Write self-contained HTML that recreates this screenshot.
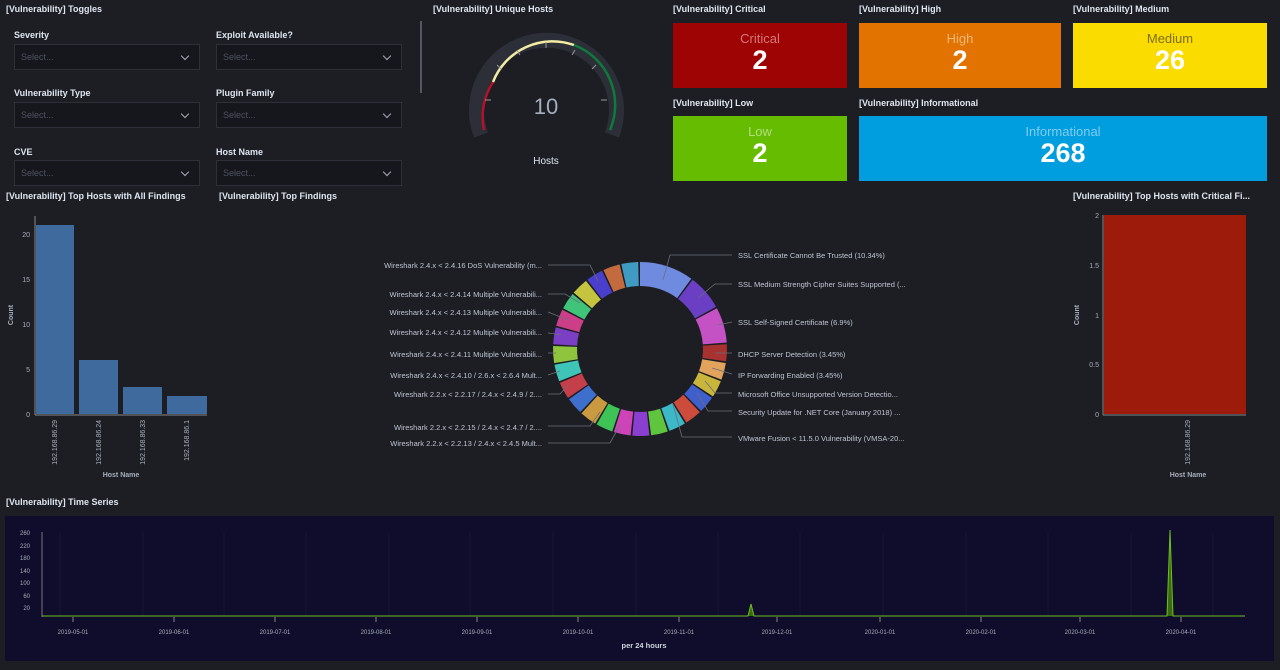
<!DOCTYPE html>
<html><head><meta charset="utf-8"><style>
*{margin:0;padding:0;box-sizing:border-box}
body{width:1280px;height:670px;background:#1d1e24;font-family:"Liberation Sans",sans-serif;color:#dfe5ef;position:relative;overflow:hidden}
.t{position:absolute;font-size:9px;font-weight:bold;color:#dfe5ef;white-space:nowrap}
.l{position:absolute;font-size:9px;font-weight:bold;color:#dfe5ef}
.sel{position:absolute;width:186px;height:26px;background:#16171c;border:1px solid #2e3039;font-size:9px;color:#4f5362;padding:7px 0 0 6px}
.sel:after{content:"";position:absolute;right:11px;top:8px;width:5px;height:5px;border-right:1px solid #a8acb8;border-bottom:1px solid #a8acb8;transform:rotate(45deg)}
.tile{position:absolute;text-align:center}
.tile .a{font-size:13px;margin-top:9px;line-height:14px}
.tile .b{font-size:27px;font-weight:bold;color:#fff;line-height:28px}
svg{position:absolute;left:0;top:0}
</style></head><body>
<div class="t" style="left:6px;top:4px">[Vulnerability] Toggles</div>
<div class="l" style="left:14px;top:30px">Severity</div>
<div class="l" style="left:216px;top:30px">Exploit Available?</div>
<div class="sel" style="left:14px;top:44px">Select...</div>
<div class="sel" style="left:216px;top:44px">Select...</div>
<div class="l" style="left:14px;top:88px">Vulnerability Type</div>
<div class="l" style="left:216px;top:88px">Plugin Family</div>
<div class="sel" style="left:14px;top:102px">Select...</div>
<div class="sel" style="left:216px;top:102px">Select...</div>
<div class="l" style="left:14px;top:147px">CVE</div>
<div class="l" style="left:216px;top:147px">Host Name</div>
<div class="sel" style="left:14px;top:160px">Select...</div>
<div class="sel" style="left:216px;top:160px">Select...</div>
<div style="position:absolute;left:420px;top:21px;width:2px;height:72px;background:#555862"></div>
<div class="t" style="left:433px;top:4px">[Vulnerability] Unique Hosts</div>
<div class="t" style="left:673px;top:4px">[Vulnerability] Critical</div>
<div class="t" style="left:859px;top:4px">[Vulnerability] High</div>
<div class="t" style="left:1073px;top:4px">[Vulnerability] Medium</div>
<div class="t" style="left:673px;top:98px">[Vulnerability] Low</div>
<div class="t" style="left:859px;top:98px">[Vulnerability] Informational</div>
<div class="tile" style="left:673px;top:23px;width:174px;height:65px;background:#9e0404"><div class="a" style="color:#d5777a">Critical</div><div class="b">2</div></div>
<div class="tile" style="left:859px;top:23px;width:202px;height:65px;background:#e27300"><div class="a" style="color:#f0b77a">High</div><div class="b">2</div></div>
<div class="tile" style="left:1073px;top:23px;width:194px;height:65px;background:#fbdc00"><div class="a" style="color:#7d6e10">Medium</div><div class="b">26</div></div>
<div class="tile" style="left:673px;top:116px;width:174px;height:65px;background:#66bc00"><div class="a" style="color:#b2de80">Low</div><div class="b">2</div></div>
<div class="tile" style="left:859px;top:116px;width:408px;height:65px;background:#009ddf"><div class="a" style="color:#80cdef">Informational</div><div class="b">268</div></div>
<div class="t" style="left:6px;top:191px">[Vulnerability] Top Hosts with All Findings</div>
<div class="t" style="left:219px;top:191px">[Vulnerability] Top Findings</div>
<div class="t" style="left:1073px;top:191px">[Vulnerability] Top Hosts with Critical Fi...</div>
<div class="t" style="left:6px;top:497px">[Vulnerability] Time Series</div>
<div style="position:absolute;left:5px;top:516px;width:1269px;height:145px;background:#100c2b"></div>

<svg width="1280" height="670" font-family="Liberation Sans, sans-serif">
<!-- gauge -->
<path d="M481,135 A70,70 0 1 1 612,135" fill="none" stroke="#2c2f37" stroke-width="15"/>
<path d="M484,130 A64,64 0 0 1 493,82" fill="none" stroke="#b3122a" stroke-width="2.5"/>
<path d="M493,82 A64,64 0 0 1 574,45" fill="none" stroke="#f2eca5" stroke-width="2.5"/>
<path d="M574,45 A64,64 0 0 1 610,130" fill="none" stroke="#0e7a3c" stroke-width="2.5"/>
<g stroke="#999" stroke-width="1">
<line x1="546" y1="42" x2="546" y2="48"/><line x1="517" y1="50" x2="520" y2="55"/><line x1="575" y1="50" x2="572" y2="55"/><line x1="497" y1="65" x2="501" y2="69"/><line x1="596" y1="65" x2="592" y2="69"/><line x1="485" y1="100" x2="491" y2="100"/><line x1="607" y1="100" x2="601" y2="100"/>
</g>
<text x="546" y="114" text-anchor="middle" font-size="22" fill="#a6adbb">10</text>
<text x="546" y="164" text-anchor="middle" font-size="10" fill="#dfe5ef">Hosts</text>

<!-- left bar chart -->
<g font-size="7" fill="#a8aebb">
<line x1="35" y1="216" x2="35" y2="415" stroke="#888"/><line x1="35" y1="415" x2="207" y2="415" stroke="#888"/>
<rect x="36" y="225" width="38" height="189" fill="#3e6a9e"/>
<rect x="79" y="360" width="39" height="54" fill="#3e6a9e"/>
<rect x="123" y="387" width="39" height="27" fill="#3e6a9e"/>
<rect x="167" y="396" width="40" height="18" fill="#3e6a9e"/>
<text x="30" y="237" text-anchor="end">20</text><text x="30" y="327" text-anchor="end">10</text><text x="30" y="282" text-anchor="end">15</text><text x="30" y="372" text-anchor="end">5</text><text x="30" y="417" text-anchor="end">0</text>
<text transform="translate(57,420) rotate(-90)" text-anchor="end">192.168.86.29</text>
<text transform="translate(101,420) rotate(-90)" text-anchor="end">192.168.86.24</text>
<text transform="translate(145,420) rotate(-90)" text-anchor="end">192.168.86.33</text>
<text transform="translate(189,420) rotate(-90)" text-anchor="end">192.168.86.1</text>
<text x="121" y="477" text-anchor="middle" font-weight="bold">Host Name</text>
<text transform="translate(13,315) rotate(-90)" text-anchor="middle" font-weight="bold">Count</text>
</g>

<!-- right bar chart -->
<g font-size="7" fill="#a8aebb">
<rect x="1104" y="215" width="142" height="199" fill="#9d1b0b"/>
<line x1="1103" y1="215" x2="1103" y2="415" stroke="#888"/><line x1="1103" y1="415" x2="1246" y2="415" stroke="#888"/>
<text x="1099" y="218" text-anchor="end">2</text><text x="1099" y="268" text-anchor="end">1.5</text><text x="1099" y="318" text-anchor="end">1</text><text x="1099" y="367" text-anchor="end">0.5</text><text x="1099" y="417" text-anchor="end">0</text>
<text transform="translate(1190,420) rotate(-90)" text-anchor="end">192.168.86.29</text>
<text x="1188" y="477" text-anchor="middle" font-weight="bold">Host Name</text>
<text transform="translate(1079,315) rotate(-90)" text-anchor="middle" font-weight="bold">Count</text>
</g>

<!-- donut -->
<g transform="translate(640,349)" fill="none" stroke-width="24">
<circle r="75" stroke="#6f8be0" stroke-dasharray="47.25 500" transform="rotate(-90)"/>
<circle r="75" stroke="#6a3fc4" stroke-dasharray="31 500" transform="rotate(-52.76)"/>
<circle r="75" stroke="#c452c4" stroke-dasharray="31 500" transform="rotate(-27.93)"/>
<circle r="75" stroke="#a8322f" stroke-dasharray="14.75 500" transform="rotate(-3.10)"/>
<circle r="75" stroke="#e2a45d" stroke-dasharray="14.75 500" transform="rotate(9.31)"/>
<circle r="75" stroke="#c9b53b" stroke-dasharray="14.75 500" transform="rotate(21.72)"/>
<circle r="75" stroke="#3f5fcc" stroke-dasharray="14.75 500" transform="rotate(34.14)"/>
<circle r="75" stroke="#cc4b3a" stroke-dasharray="14.75 500" transform="rotate(46.55)"/>
<circle r="75" stroke="#3cb8c8" stroke-dasharray="14.75 500" transform="rotate(58.97)"/>
<circle r="75" stroke="#5fc43e" stroke-dasharray="14.75 500" transform="rotate(71.38)"/>
<circle r="75" stroke="#8a3fd0" stroke-dasharray="14.75 500" transform="rotate(83.79)"/>
<circle r="75" stroke="#cc44b8" stroke-dasharray="14.75 500" transform="rotate(96.21)"/>
<circle r="75" stroke="#3ec456" stroke-dasharray="14.75 500" transform="rotate(108.62)"/>
<circle r="75" stroke="#c99a3f" stroke-dasharray="14.75 500" transform="rotate(121.03)"/>
<circle r="75" stroke="#3f6fcc" stroke-dasharray="14.75 500" transform="rotate(133.45)"/>
<circle r="75" stroke="#c43f4a" stroke-dasharray="14.75 500" transform="rotate(145.86)"/>
<circle r="75" stroke="#3fc4b8" stroke-dasharray="14.75 500" transform="rotate(158.28)"/>
<circle r="75" stroke="#8fc43f" stroke-dasharray="14.75 500" transform="rotate(170.69)"/>
<circle r="75" stroke="#7a3fc4" stroke-dasharray="14.75 500" transform="rotate(183.10)"/>
<circle r="75" stroke="#cc3f88" stroke-dasharray="14.75 500" transform="rotate(195.52)"/>
<circle r="75" stroke="#3fc47a" stroke-dasharray="14.75 500" transform="rotate(207.93)"/>
<circle r="75" stroke="#c4c43f" stroke-dasharray="14.75 500" transform="rotate(220.34)"/>
<circle r="75" stroke="#4a3fcc" stroke-dasharray="14.75 500" transform="rotate(232.76)"/>
<circle r="75" stroke="#c46a3f" stroke-dasharray="14.75 500" transform="rotate(245.17)"/>
<circle r="75" stroke="#3f9ac4" stroke-dasharray="14.75 500" transform="rotate(257.59)"/>
</g>
<g stroke="#6b6f7a" fill="none" stroke-width="0.8">
<polyline points="663,280 670,255 732,255"/><polyline points="698,298 715,284 732,284"/><polyline points="718,325 732,322"/>
<polyline points="715,353 732,353"/><polyline points="712,368 732,374"/><polyline points="705,381 715,393 732,393"/>
<polyline points="697,393 708,411 732,411"/><polyline points="673,404 682,437 732,437"/>
<polyline points="548,265 590,265 598,281"/><polyline points="548,294 565,294 580,303"/><polyline points="548,312 568,320"/>
<polyline points="548,333 562,335"/><polyline points="548,353 556,353"/><polyline points="548,375 560,371"/>
<polyline points="548,394 560,394 568,385"/><polyline points="548,426 590,426 600,412"/><polyline points="548,443 610,443 620,425"/>
</g>
<g font-size="7.5" fill="#bfc5d2">
<text x="738" y="258">SSL Certificate Cannot Be Trusted (10.34%)</text>
<text x="738" y="287">SSL Medium Strength Cipher Suites Supported (...</text>
<text x="738" y="325">SSL Self-Signed Certificate (6.9%)</text>
<text x="738" y="357">DHCP Server Detection (3.45%)</text>
<text x="738" y="378">IP Forwarding Enabled (3.45%)</text>
<text x="738" y="397">Microsoft Office Unsupported Version Detectio...</text>
<text x="738" y="415">Security Update for .NET Core (January 2018) ...</text>
<text x="738" y="441">VMware Fusion &lt; 11.5.0 Vulnerability (VMSA-20...</text>
</g>
<g font-size="7.5" fill="#bfc5d2" text-anchor="end">
<text x="542" y="268">Wireshark 2.4.x &lt; 2.4.16 DoS Vulnerability (m...</text>
<text x="542" y="297">Wireshark 2.4.x &lt; 2.4.14 Multiple Vulnerabili...</text>
<text x="542" y="315">Wireshark 2.4.x &lt; 2.4.13 Multiple Vulnerabili...</text>
<text x="542" y="335">Wireshark 2.4.x &lt; 2.4.12 Multiple Vulnerabili...</text>
<text x="542" y="357">Wireshark 2.4.x &lt; 2.4.11 Multiple Vulnerabili...</text>
<text x="542" y="378">Wireshark 2.4.x &lt; 2.4.10 / 2.6.x &lt; 2.6.4 Mult...</text>
<text x="542" y="397">Wireshark 2.2.x &lt; 2.2.17 / 2.4.x &lt; 2.4.9 / 2....</text>
<text x="542" y="430">Wireshark 2.2.x &lt; 2.2.15 / 2.4.x &lt; 2.4.7 / 2....</text>
<text x="542" y="446">Wireshark 2.2.x &lt; 2.2.13 / 2.4.x &lt; 2.4.5 Mult...</text>
</g>

<!-- time series -->
<g font-size="6" fill="#a8aebb">
<g stroke="#1e1b3c" stroke-width="0.7">
<line x1="60" y1="532" x2="60" y2="616"/><line x1="143" y1="532" x2="143" y2="616"/><line x1="224" y1="532" x2="224" y2="616"/><line x1="306" y1="532" x2="306" y2="616"/><line x1="389" y1="532" x2="389" y2="616"/><line x1="470" y1="532" x2="470" y2="616"/><line x1="553" y1="532" x2="553" y2="616"/><line x1="636" y1="532" x2="636" y2="616"/><line x1="718" y1="532" x2="718" y2="616"/><line x1="800" y1="532" x2="800" y2="616"/><line x1="883" y1="532" x2="883" y2="616"/><line x1="966" y1="532" x2="966" y2="616"/><line x1="1048" y1="532" x2="1048" y2="616"/><line x1="1131" y1="532" x2="1131" y2="616"/><line x1="1213" y1="532" x2="1213" y2="616"/>
</g>
<line x1="42" y1="532" x2="42" y2="617" stroke="#777"/>
<g text-anchor="end"><text x="30" y="535">260</text><text x="30" y="548">220</text><text x="30" y="560">180</text><text x="30" y="573">140</text><text x="30" y="585">100</text><text x="30" y="598">60</text><text x="30" y="610">20</text></g>
<path d="M42,616 L748,616 L751,604 L754,616 L1167,616 L1170,530 L1173,616 L1245,616" fill="#3a6a12" stroke="#6fbf1f" stroke-width="1"/>
<g text-anchor="middle">
<text x="73" y="634">2019-05-01</text><text x="174" y="634">2019-06-01</text><text x="275" y="634">2019-07-01</text><text x="376" y="634">2019-08-01</text><text x="477" y="634">2019-09-01</text><text x="578" y="634">2019-10-01</text><text x="679" y="634">2019-11-01</text><text x="777" y="634">2019-12-01</text><text x="880" y="634">2020-01-01</text><text x="981" y="634">2020-02-01</text><text x="1080" y="634">2020-03-01</text><text x="1181" y="634">2020-04-01</text>
<text x="644" y="648" font-size="7.5" font-weight="bold" fill="#cfd4de">per 24 hours</text>
</g>
<g stroke="#888"><line x1="73" y1="617" x2="73" y2="622"/><line x1="174" y1="617" x2="174" y2="622"/><line x1="275" y1="617" x2="275" y2="622"/><line x1="376" y1="617" x2="376" y2="622"/><line x1="477" y1="617" x2="477" y2="622"/><line x1="578" y1="617" x2="578" y2="622"/><line x1="679" y1="617" x2="679" y2="622"/><line x1="777" y1="617" x2="777" y2="622"/><line x1="880" y1="617" x2="880" y2="622"/><line x1="981" y1="617" x2="981" y2="622"/><line x1="1080" y1="617" x2="1080" y2="622"/><line x1="1181" y1="617" x2="1181" y2="622"/></g>
</g>
</svg>
</body></html>
